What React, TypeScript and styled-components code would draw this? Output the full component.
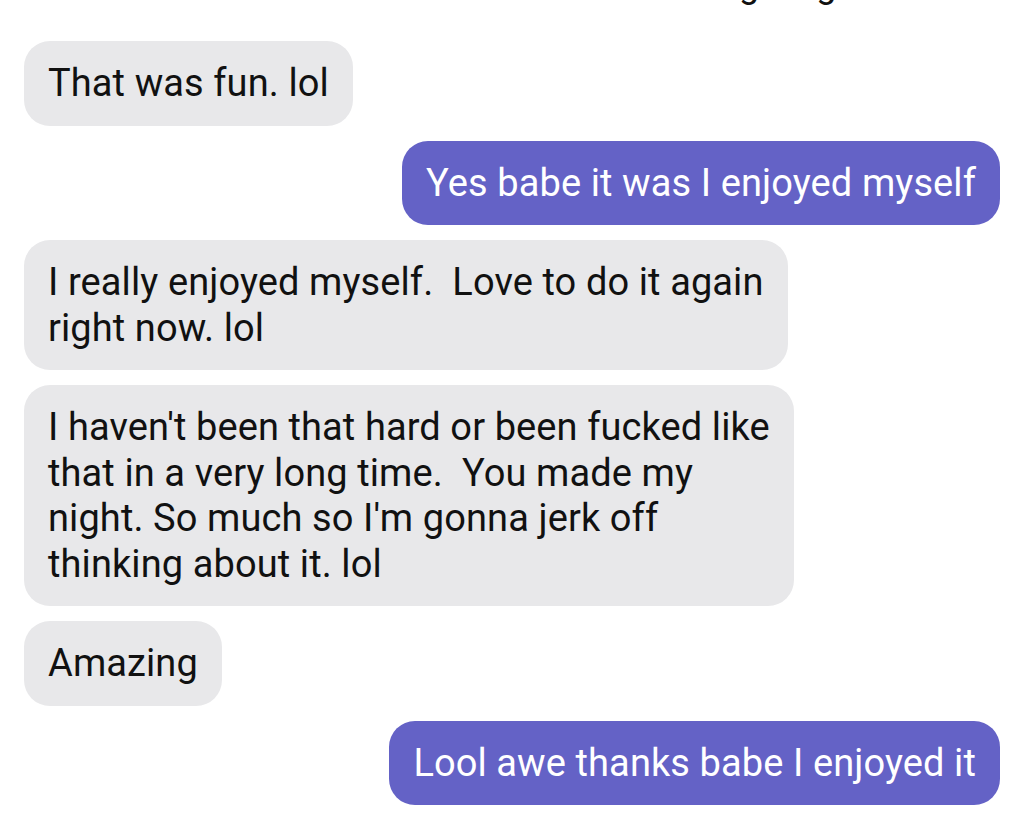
import { FC, ReactElement } from 'react'
import styled, { createGlobalStyle } from 'styled-components'

const GlobalStyle = createGlobalStyle`
  html, body {
    margin: 0;
    padding: 0;
    background: #ffffff;
  }
  body {
    font-family: Roboto, 'Noto Sans', 'Liberation Sans', sans-serif;
  }
`

type Msg = {
  mine: boolean
  lines: string[]
}

const messages: Msg[] = [
  { mine: false, lines: ['That was fun. lol'] },
  { mine: true, lines: ['Yes babe it was I enjoyed myself'] },
  { mine: false, lines: ['I really enjoyed myself.  Love to do it again', 'right now. lol'] },
  {
    mine: false,
    lines: [
      "I haven't been that hard or been fucked like",
      'that in a very long time.  You made my',
      "night. So much so I'm gonna jerk off",
      'thinking about it. lol',
    ],
  },
  { mine: false, lines: ['Amazing'] },
  { mine: true, lines: ['Lool awe thanks babe I enjoyed it'] },
]

const App: FC = (): ReactElement => {
  return (
    <>
      <GlobalStyle />
      <Main>
        <TopLine>
          <Cut>g</Cut>
          <Cut>g</Cut>
        </TopLine>
        <Thread>
          {messages.map((item, _index) => (
            // eslint-disable-next-line react/no-array-index-key
            <Row key={_index} mine={item.mine}>
              <Bubble mine={item.mine}>
                {item.lines.map((line, i) => (
                  // eslint-disable-next-line react/no-array-index-key
                  <Line key={i}>{line}</Line>
                ))}
              </Bubble>
            </Row>
          ))}
        </Thread>
      </Main>
    </>
  )
}

const Main = styled.div`
  width: 1024px;
  height: 815px;
  overflow: hidden;
  background: #ffffff;
`
const TopLine = styled.div`
  display: flex;
  gap: 57px;
  padding-left: 739px;
  margin-top: -38px;
  height: 46px;
  line-height: 46px;
  font-size: 36px;
  color: #111111;
`
const Cut = styled.span`
  display: block;
`
const Thread = styled.div`
  display: flex;
  flex-direction: column;
  gap: 15px;
  padding: 0 24px;
  margin-top: 33px;
`
const Row = styled.div<{ mine: boolean }>`
  display: flex;
  justify-content: ${(p) => (p.mine ? 'flex-end' : 'flex-start')};
`
const Bubble = styled.div<{ mine: boolean }>`
  padding: 20px 24px 19px;
  border-radius: 26px;
  background: ${(p) => (p.mine ? '#6462c6' : '#e8e8ea')};
  color: ${(p) => (p.mine ? '#ffffff' : '#111111')};
  font-size: 38px;
  line-height: 45.5px;
  letter-spacing: 0.1px;
`
const Line = styled.div`
  white-space: pre;
`
export default App
